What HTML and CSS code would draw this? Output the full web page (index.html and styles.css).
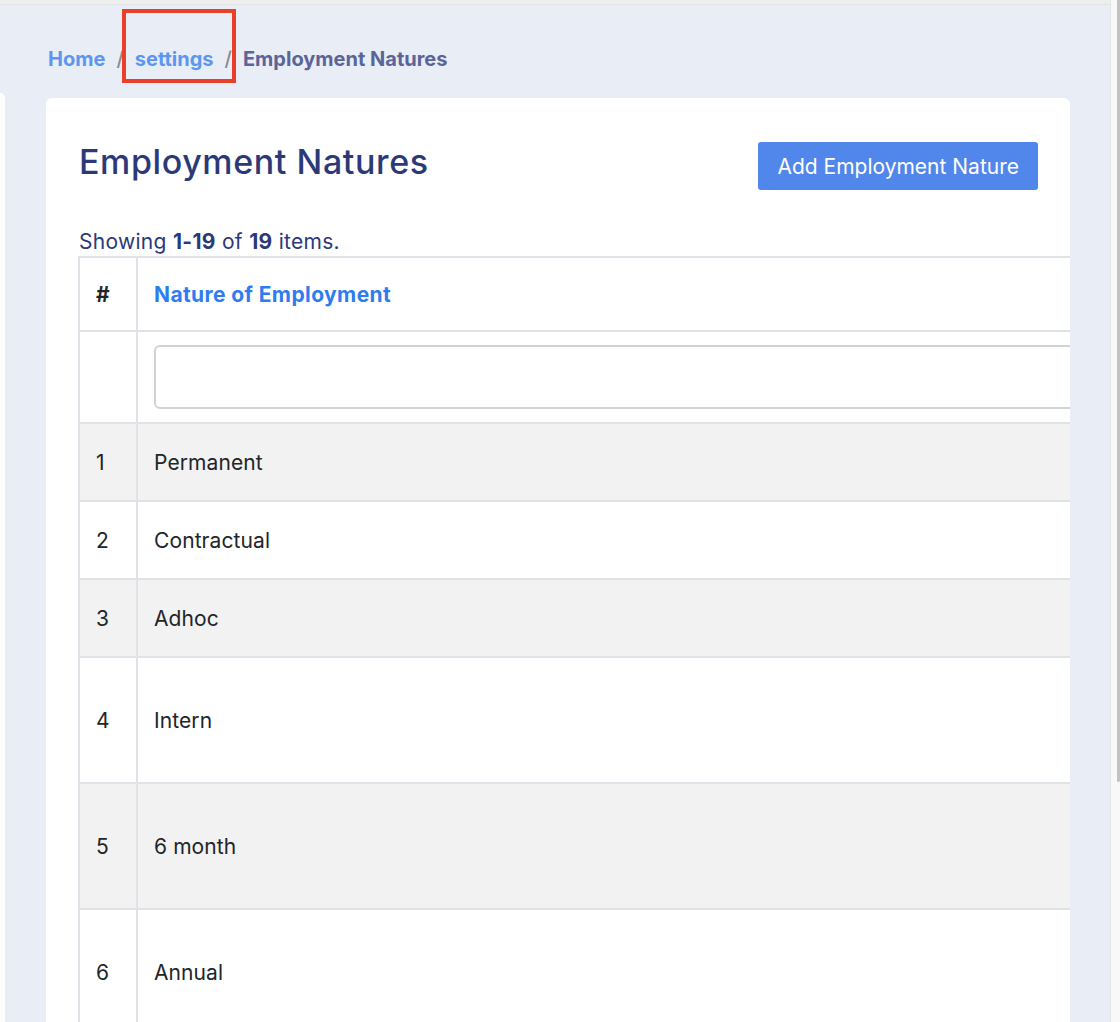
FILE: index.html
```html
<!DOCTYPE html>
<html lang="en">
<head>
<meta charset="utf-8">
<title>Employment Natures</title>
<link rel="stylesheet" href="styles.css">
</head>
<body>
<div class="window">
  <div class="viewport">
    <div class="topbar"></div>
    <div class="layout">
      <aside class="sidebar"></aside>
      <main class="content">
        <nav class="breadcrumb">
          <a class="crumb-link" href="#">Home</a>
          <span class="sep">/</span>
          <span class="crumb-marked"><a class="crumb-link" href="#">settings</a><span class="highlight-box"></span></span>
          <span class="sep">/</span>
          <span class="crumb-current">Employment Natures</span>
        </nav>
        <section class="card">
          <div class="card-header">
            <h1 class="title">Employment Natures</h1>
            <button class="btn-primary" type="button">Add Employment Nature</button>
          </div>
          <div class="summary">Showing <b>1-19</b> of <b>19</b> items.</div>
          <table class="grid">
            <colgroup><col class="col-num"><col class="col-name"></colgroup>
            <thead>
              <tr class="row-head">
                <th class="cell-num">#</th>
                <th class="cell-name"><a class="sort-link" href="#">Nature of Employment</a></th>
              </tr>
              <tr class="row-filter">
                <td class="cell-num"></td>
                <td class="cell-name"><input class="filter-input" type="text"></td>
              </tr>
            </thead>
            <tbody>
              <tr class="row odd"><td class="cell-num">1</td><td class="cell-name">Permanent</td></tr>
              <tr class="row"><td class="cell-num">2</td><td class="cell-name">Contractual</td></tr>
              <tr class="row odd"><td class="cell-num">3</td><td class="cell-name">Adhoc</td></tr>
              <tr class="row tall"><td class="cell-num">4</td><td class="cell-name">Intern</td></tr>
              <tr class="row tall odd"><td class="cell-num">5</td><td class="cell-name">6 month</td></tr>
              <tr class="row tall"><td class="cell-num">6</td><td class="cell-name">Annual</td></tr>
            </tbody>
          </table>
        </section>
      </main>
    </div>
  </div>
  <div class="scrollbar"><div class="thumb"></div></div>
</div>
</body>
</html>
```

FILE: styles.css
```css
* { box-sizing: border-box; }
html, body { margin: 0; padding: 0; }
body {
  font-family: Inter, "Noto Sans", "Liberation Sans", sans-serif;
  background: #e9edf6;
}
.window {
  display: flex;
  width: 1120px;
  height: 1022px;
  overflow: hidden;
}
.viewport {
  flex: 1;
  background: #e9edf6;
  overflow: hidden;
}
.topbar {
  height: 5px;
  background: #eeeeee;
  border-bottom: 1px solid #e2e2e2;
}
.layout {
  display: flex;
  align-items: flex-start;
}
.sidebar {
  width: 5px;
  height: 1000px;
  margin-top: 88px;
  background: #ffffff;
  border-top-right-radius: 6px;
}
.content {
  margin-left: 41px;
  width: 1024px;
}
.breadcrumb {
  margin-top: 42px;
  height: 24px;
  line-height: 24px;
  font-size: 20px;
  font-weight: 700;
  display: flex;
  align-items: baseline;
  padding-left: 2px;
}
.crumb-link {
  color: #5b97f0;
  text-decoration: none;
}
.sep {
  color: #8a8a8a;
  margin: 0 11px;
  font-weight: 500;
}
.crumb-marked { position: relative; }
.highlight-box {
  position: absolute;
  left: -13px;
  right: -22px;
  top: -38px;
  bottom: -12px;
  border: 4px solid #e8402a;
}
.crumb-current { color: #5b6499; }
.card {
  margin-top: 27px;
  background: #ffffff;
  border-radius: 6px 6px 0 0;
  padding: 44px 32px 0 32px;
  overflow: hidden;
  height: 1000px;
}
.card-header {
  display: flex;
  justify-content: space-between;
  align-items: flex-start;
  padding-left: 1px;
}
.title {
  margin: 0;
  font-size: 34px;
  line-height: 40px;
  font-weight: 500;
  color: #2c3978;
  letter-spacing: 0.6px;
}
.btn-primary {
  height: 48px;
  padding: 0 19px;
  border: none;
  border-radius: 3px;
  background: #5186eb;
  color: #ffffff;
  font-family: inherit;
  font-size: 21px;
  font-weight: 400;
}
.summary {
  margin-top: 40px;
  padding-left: 1px;
  font-size: 21px;
  line-height: 24px;
  color: #2c3978;
  margin-bottom: 2px;
  letter-spacing: 0.3px;
}
.summary b { font-weight: 700; }
.grid {
  border-collapse: collapse;
  width: 1100px;
  table-layout: fixed;
  color: #212529;
  font-size: 21px;
  letter-spacing: 0.1px;
}
.col-num { width: 58px; }
.grid th, .grid td {
  border: 2px solid #dfe3e8;
  padding: 0 16px;
  text-align: left;
  vertical-align: middle;
}
.row-head th {
  height: 74px;
  font-size: 21px;
  font-weight: 700;
  letter-spacing: 0.4px;
}
.sort-link {
  color: #2f7cf0;
  text-decoration: none;
}
.row-filter td { height: 92px; }
.filter-input {
  display: block;
  width: 100%;
  height: 64px;
  border: 2px solid #cfd2d6;
  border-radius: 6px;
  background: #ffffff;
}
.row td { height: 78px; }
.row.tall td { height: 126px; }
.row.odd td { background: #f2f2f2; }
.scrollbar {
  width: 10px;
  background: #f8f8f8;
  border-left: 1px solid #e6e6e6;
  position: relative;
}
.thumb {
  position: absolute;
  right: 0;
  top: 0;
  width: 3px;
  height: 782px;
  background: #c2c2c2;
  border-radius: 0 0 2px 2px;
}
```
